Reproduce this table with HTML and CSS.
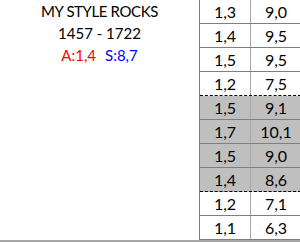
FILE: index.html
```html
<!DOCTYPE html>
<html>
<head>
<meta charset="utf-8">
<link rel="stylesheet" href="styles.css">
</head>
<body>
<div class="sheet">
  <div class="info">
    <div class="line title">MY STYLE ROCKS</div>
    <div class="line">1457 - 1722</div>
    <div class="line"><span class="a">A:1,4</span><span class="s">S:8,7</span></div>
  </div>
  <div class="grid">
    <div class="row"><div class="cell">1,3</div><div class="cell">9,0</div></div>
    <div class="row"><div class="cell">1,4</div><div class="cell">9,5</div></div>
    <div class="row"><div class="cell">1,5</div><div class="cell">9,5</div></div>
    <div class="row dash"><div class="cell">1,2</div><div class="cell">7,5</div></div>
    <div class="row shade"><div class="cell">1,5</div><div class="cell">9,1</div></div>
    <div class="row shade"><div class="cell">1,7</div><div class="cell">10,1</div></div>
    <div class="row shade"><div class="cell">1,5</div><div class="cell">9,0</div></div>
    <div class="row shade dash"><div class="cell">1,4</div><div class="cell">8,6</div></div>
    <div class="row"><div class="cell">1,2</div><div class="cell">7,1</div></div>
    <div class="row"><div class="cell">1,1</div><div class="cell">6,3</div></div>
  </div>
</div>
</body>
</html>
```
FILE: styles.css
```css
html, body {
  margin: 0;
  padding: 0;
  background: #ffffff;
}
body {
  width: 300px;
  height: 243px;
  overflow: hidden;
  font-family: Lato, "Liberation Sans", sans-serif;
  color: #000;
}
.sheet {
  display: flex;
  width: 300px;
  height: 242px;
  border-bottom: 2px solid #a6a6a6;
  box-sizing: border-box;
}
.info {
  width: 199px;
  flex: none;
  display: flex;
  flex-direction: column;
  align-items: center;
  padding-top: 0;
  font-size: 15px;
}
.line {
  height: 22px;
  line-height: 22px;
  display: flex;
  gap: 9px;
}
.title {
  letter-spacing: -0.4px;
}
.a { color: #ff0000; }
.s { color: #0000ff; }
.grid {
  display: flex;
  flex-direction: column;
  border-left: 1px solid #7f7f7f;
}
.row {
  display: grid;
  grid-template-columns: 51px 50px;
  height: 24px;
  box-sizing: border-box;
  border-bottom: 1px solid #7f7f7f;
}
.row.dash {
  border-bottom: 1px dashed #000;
}
.row.shade {
  background: #bfbfbf;
}
.cell {
  display: flex;
  align-items: center;
  justify-content: center;
  font-size: 16px;
  line-height: 23px;
}
.cell:first-child {
  border-right: 1px solid #a6a6a6;
}
```
